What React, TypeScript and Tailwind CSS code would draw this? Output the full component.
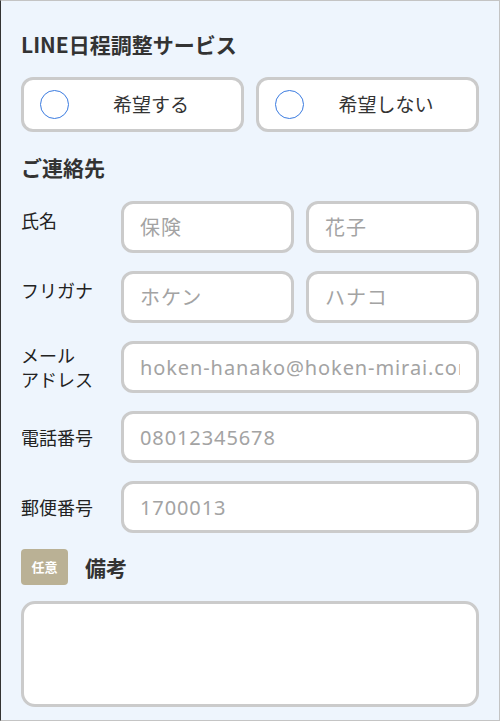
import React from "react";

const font = { fontFamily: '"Noto Sans CJK JP", "Noto Sans", sans-serif' };
const inputFont = { fontFamily: '"Noto Sans", "Noto Sans CJK JP", sans-serif' };

function Radio({ label }: { label: string }) {
  return (
    <label className="flex h-[55px] flex-1 items-center rounded-[12px] border-[3px] border-[#cbcbcb] bg-white pl-[16px] pr-[8px]">
      <span className="h-[29px] w-[29px] shrink-0 rounded-full border-[1.5px] border-[#3a7be0] bg-white" />
      <span className="flex-1 text-center text-[19px] text-[#333]">{label}</span>
    </label>
  );
}

function Field({ placeholder }: { placeholder: string }) {
  return (
    <input
      placeholder={placeholder}
      className="h-[52px] w-full min-w-0 rounded-[12px] border-[3px] border-[#cbcbcb] bg-white px-[16px] text-[20px] tracking-[0.9px] text-[#333] outline-none placeholder:text-[#a3a3a3]"
      style={inputFont}
    />
  );
}

function Row({
  label,
  top,
  children,
}: {
  label: React.ReactNode;
  top?: boolean;
  children: React.ReactNode;
}) {
  return (
    <div className={`flex ${top ? "items-start" : "items-center"}`}>
      <div
        className={`w-[100px] shrink-0 text-[18px] leading-[24px] text-[#222] ${
          top ? "pt-[7px]" : ""
        }`}
      >
        {label}
      </div>
      <div className="flex flex-1 gap-[12px]">{children}</div>
    </div>
  );
}

export default function App() {
  return (
    <div
      className="h-[721px] w-[500px] overflow-hidden border border-[#c4c4c4] border-l-[#333] bg-[#eef5fd] px-[20px] pt-[29px]"
      style={font}
    >
      <h2 className="text-[21px] font-bold leading-[28px] text-[#333]">LINE日程調整サービス</h2>

      <div className="mt-[19px] flex gap-[12px]">
        <Radio label="希望する" />
        <Radio label="希望しない" />
      </div>

      <h2 className="mt-[21px] text-[21px] font-bold leading-[28px] text-[#333]">ご連絡先</h2>

      <div className="mt-[20px] flex flex-col gap-[18px]">
        <Row label="氏名" top>
          <Field placeholder="保険" />
          <Field placeholder="花子" />
        </Row>
        <Row label="フリガナ" top>
          <Field placeholder="ホケン" />
          <Field placeholder="ハナコ" />
        </Row>
        <Row
          label={
            <>
              <div>メール</div>
              <div>アドレス</div>
            </>
          }
        >
          <Field placeholder="hoken-hanako@hoken-mirai.com" />
        </Row>
        <Row label="電話番号">
          <Field placeholder="08012345678" />
        </Row>
        <Row label="郵便番号">
          <Field placeholder="1700013" />
        </Row>
      </div>

      <div className="mt-[16px] flex items-center gap-[17px]">
        <span className="flex h-[36px] w-[47px] items-center justify-center rounded-[4px] bg-[#bab195] text-[13px] font-bold text-white">
          任意
        </span>
        <span className="text-[21px] font-bold leading-[28px] text-[#333]">備考</span>
      </div>

      <textarea
        className="mt-[16px] block h-[106px] w-full resize-none rounded-[14px] border-[3px] border-[#cbcbcb] bg-white p-[12px] text-[18px] outline-none"
        style={font}
      />
    </div>
  );
}
